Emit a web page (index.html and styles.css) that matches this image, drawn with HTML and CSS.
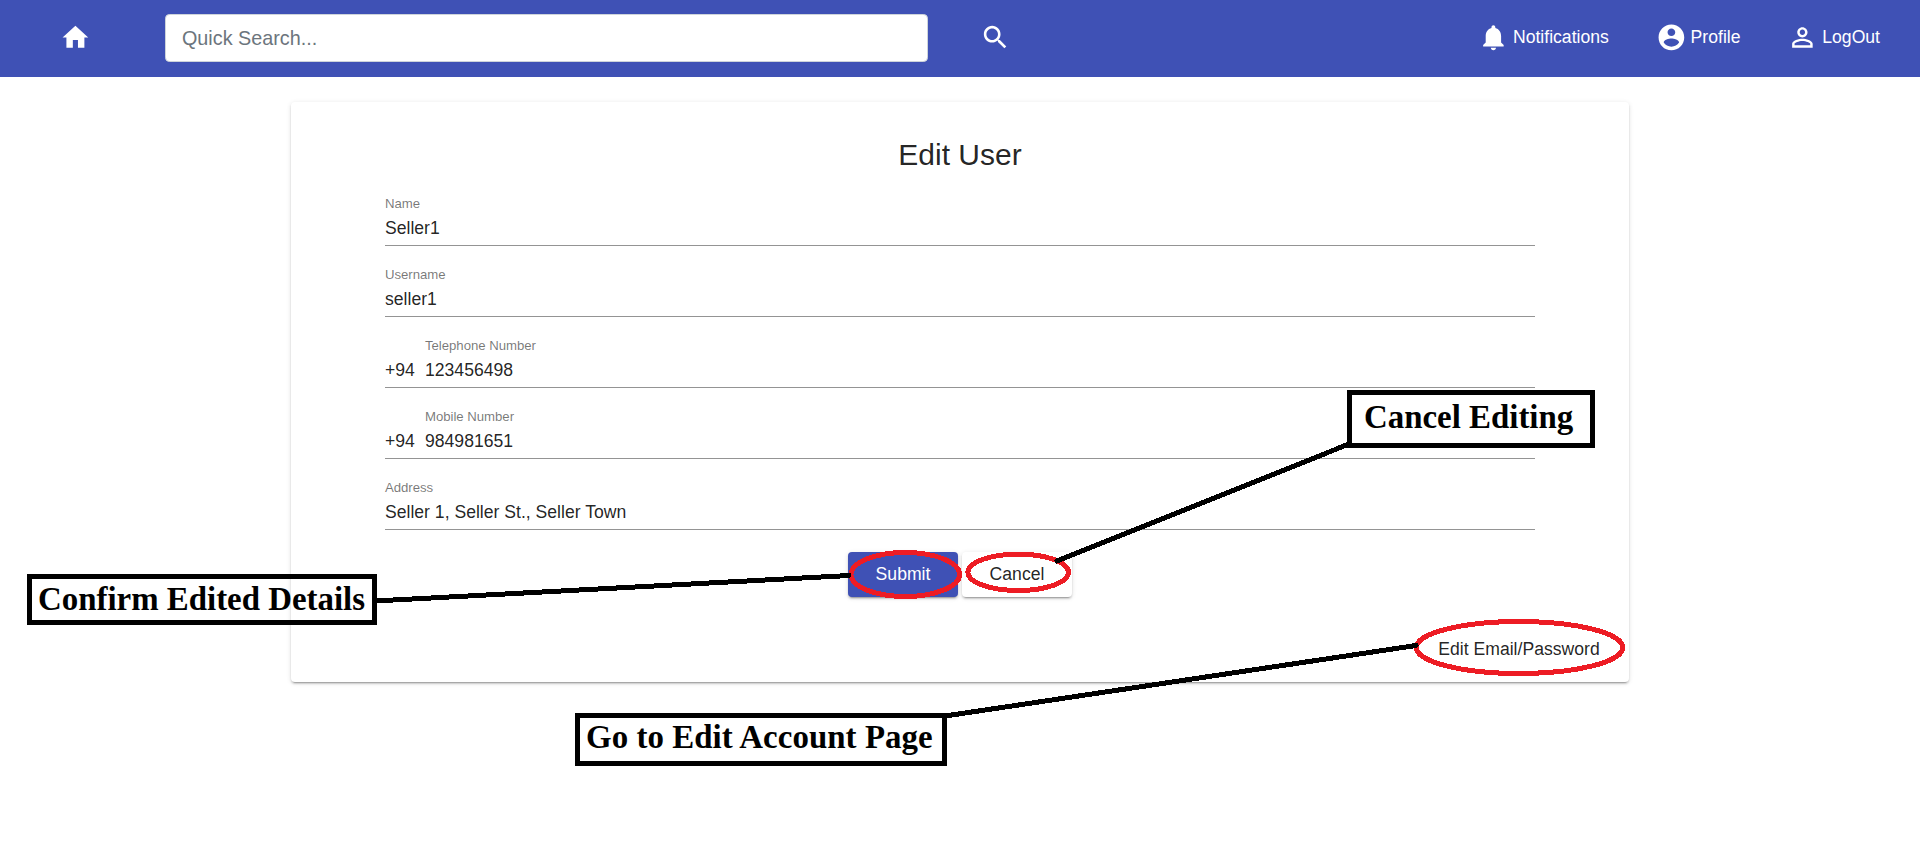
FILE: index.html
```html
<!DOCTYPE html>
<html lang="en">
<head>
<meta charset="utf-8">
<title>Edit User</title>
<link rel="stylesheet" href="styles.css">
</head>
<body>
<header class="navbar">
  <a class="home"><svg class="icon" viewBox="0 0 24 24"><path d="M10 20v-6h4v6h5v-8h3L12 3 2 12h3v8z"/></svg></a>
  <input class="search" type="text" placeholder="Quick Search...">
  <a class="find"><svg class="icon" viewBox="0 0 24 24"><path d="M15.5 14h-.79l-.28-.27C15.41 12.59 16 11.11 16 9.5 16 5.91 13.09 3 9.5 3S3 5.91 3 9.5 5.91 16 9.5 16c1.61 0 3.09-.59 4.23-1.57l.27.28v.79l5 4.99L20.49 19l-4.99-5zm-6 0C7.01 14 5 11.99 5 9.5S7.01 5 9.5 5 14 7.01 14 9.5 11.99 14 9.5 14z"/></svg></a>
  <nav class="links">
    <a class="link"><svg class="icon" viewBox="0 0 24 24"><path d="M12 22c1.1 0 2-.9 2-2h-4c0 1.1.89 2 2 2zm6-6v-5c0-3.07-1.64-5.64-4.5-6.32V4c0-.83-.67-1.5-1.5-1.5s-1.5.67-1.5 1.5v.68C7.63 5.36 6 7.92 6 11v5l-2 2v1h16v-1l-2-2z"/></svg><span>Notifications</span></a>
    <a class="link"><svg class="icon" viewBox="0 0 24 24"><path d="M12 2C6.48 2 2 6.48 2 12s4.48 10 10 10 10-4.48 10-10S17.52 2 12 2zm0 3c1.66 0 3 1.34 3 3s-1.34 3-3 3-3-1.34-3-3 1.34-3 3-3zm0 14.2c-2.5 0-4.71-1.28-6-3.22.03-1.99 4-3.08 6-3.08 1.99 0 5.97 1.09 6 3.08-1.29 1.94-3.5 3.22-6 3.22z"/></svg><span>Profile</span></a>
    <a class="link"><svg class="icon" viewBox="0 0 24 24"><path d="M12 5.9c1.16 0 2.1.94 2.1 2.1s-.94 2.1-2.1 2.1S9.900 9.160 9.900 8s.94-2.1 2.1-2.1m0 9c2.970 0 6.100 1.460 6.100 2.100v1.100H5.900V17c0-.64 3.130-2.100 6.100-2.100M12 4C9.790 4 8 5.790 8 8s1.790 4 4 4 4-1.790 4-4-1.790-4-4-4zm0 9c-2.670 0-8 1.340-8 4v3h16v-3c0-2.660-5.330-4-8-4z"/></svg><span>LogOut</span></a>
  </nav>
</header>
<main class="card">
  <h1 class="title">Edit User</h1>
  <form class="form">
    <div class="field"><div class="control"><label class="label">Name</label><span class="value">Seller1</span></div></div>
    <div class="field"><div class="control"><label class="label">Username</label><span class="value">seller1</span></div></div>
    <div class="field"><span class="prefix">+94</span><div class="control"><label class="label">Telephone Number</label><span class="value">123456498</span></div></div>
    <div class="field"><span class="prefix">+94</span><div class="control"><label class="label">Mobile Number</label><span class="value">984981651</span></div></div>
    <div class="field"><div class="control"><label class="label">Address</label><span class="value">Seller 1, Seller St., Seller Town</span></div></div>
  </form>
  <div class="actions">
    <button class="btn primary">Submit</button>
    <button class="btn">Cancel</button>
  </div>
  <div class="footer"><button class="btn flat">Edit Email/Password</button></div>
</main>
<div class="annotations">
  <svg class="marks" viewBox="0 0 1920 852">
    <g class="rings">
      <ellipse cx="905.3" cy="574.5" rx="54.3" ry="22"/>
      <ellipse cx="1018.2" cy="572.3" rx="50.3" ry="18.2"/>
      <ellipse cx="1519.5" cy="647.5" rx="103.3" ry="26"/>
    </g>
    <g class="leaders">
      <line x1="375" y1="601" x2="849" y2="575.5"/>
      <line x1="1057" y1="561" x2="1349" y2="444"/>
      <line x1="945" y1="716" x2="1416" y2="645.5"/>
    </g>
  </svg>
  <div class="callout confirm">Confirm Edited Details</div>
  <div class="callout account">Go to Edit Account Page</div>
  <div class="callout cancel">Cancel Editing</div>
</div>
</body>
</html>
```

FILE: styles.css
```css
* { box-sizing: border-box; }
body {
  position: relative;
  margin: 0;
  height: 852px;
  overflow: hidden;
  background: #fff;
  color: rgba(0, 0, 0, .87);
  font: 17.6px/20px "Liberation Sans", Arial, sans-serif;
}
.navbar {
  display: flex;
  align-items: center;
  height: 77px;
  padding: 0 40px 2px 59.5px;
  background: #3f51b5;
  color: #fff;
}
.icon { display: block; width: 30.8px; height: 30.8px; fill: currentColor; }
.search {
  width: 763px;
  height: 48px;
  margin: 1px 52px 0 74.7px;
  padding: 0 16px;
  border: 1px solid #ced4da;
  border-radius: 4.4px;
  background: #fff;
  font: 19.8px "Liberation Sans", Arial, sans-serif;
}
.search::placeholder { color: #6c757d; opacity: 1; }
.links { display: flex; gap: 47px; margin-left: auto; }
.link { display: flex; align-items: center; gap: 4px; }
.card {
  width: 1338px;
  height: 580px;
  margin: 25px 0 0 291px;
  padding: 36px 0 0 94px;
  border-radius: 4px;
  box-shadow: 0 3px 1px -2px rgba(0, 0, 0, .2), 0 2px 2px 0 rgba(0, 0, 0, .14), 0 1px 5px 0 rgba(0, 0, 0, .12);
}
.title {
  margin: 0 94px 20px 0;
  font-size: 30px;
  line-height: 34px;
  font-weight: 400;
  text-align: center;
}
.form { width: 1150px; }
.field {
  display: flex;
  align-items: flex-end;
  height: 54px;
  margin-bottom: 17px;
  padding-bottom: 7px;
  border-bottom: 1px solid #949494;
}
.prefix { width: 40px; }
.control { display: flex; flex-direction: column; }
.label { margin-bottom: 6px; color: rgba(0, 0, 0, .54); font-size: 13.2px; line-height: 16px; letter-spacing: -.03px; }
.actions { display: flex; gap: 4px; margin-top: 22px; padding-left: 463px; }
.field:last-child { margin-bottom: 0; }
.btn {
  width: 110px;
  height: 45px;
  padding: 0 0 2px;
  border: 0;
  border-radius: 4px;
  background: #fff;
  color: rgba(0, 0, 0, .87);
  font: inherit;
  box-shadow: 0 3px 1px -2px rgba(0, 0, 0, .2), 0 2px 2px 0 rgba(0, 0, 0, .14), 0 1px 5px 0 rgba(0, 0, 0, .12);
}
.primary { background: #3f51b5; color: #fff; }
.footer { display: flex; justify-content: flex-end; padding: 30px 8px 0 0; }
.flat { width: 204px; background: transparent; box-shadow: none; }
.annotations { position: absolute; inset: 0; pointer-events: none; }
.marks { position: absolute; inset: 0; width: 1920px; height: 852px; shape-rendering: crispEdges; }
.rings { fill: none; stroke: #ed1c24; stroke-width: 5; }
.leaders { stroke: #000; stroke-width: 5; stroke-linecap: round; }
.callout {
  position: absolute;
  border: 5px solid #000;
  color: #000;
  font: bold 32.9px/36px "Liberation Serif", "Times New Roman", serif;
  white-space: nowrap;
}
.confirm { left: 27px; top: 574px; width: 350px; height: 51px; padding: 2px 0 0 6px; }
.account { left: 575px; top: 713px; width: 372px; height: 53px; padding: 1px 0 0 6px; letter-spacing: .06px; }
.cancel { left: 1347px; top: 390px; width: 248px; height: 58px; padding: 4px 0 0 12px; }
```
